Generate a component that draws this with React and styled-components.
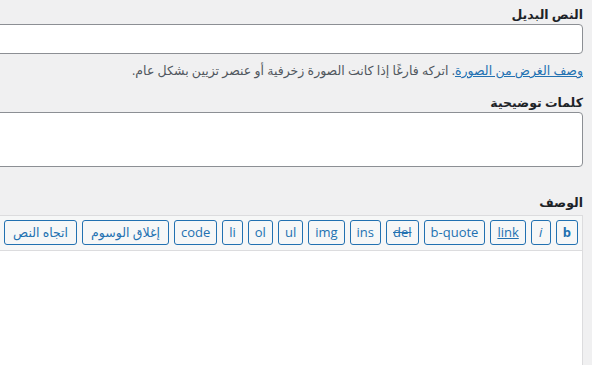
import React from 'react';
import styled, {createGlobalStyle} from 'styled-components';

const GlobalStyle = createGlobalStyle`
  html, body {
    margin: 0;
    padding: 0;
    background: #f0f0f1;
    direction: rtl;
    overflow: hidden;
  }
  body {
    font-family: "Open Sans", "DejaVu Sans", sans-serif;
    color: #1d2327;
  }
`

const Page = styled.div`
  width: 640px;
  margin-right: 9px;
  padding-top: 6px;
  height: 365px;
`

const Field = styled.div`
  margin-bottom: ${props => props.$space || 0}px;
`

const Label = styled.label`
  display: block;
  font-size: 12.5px;
  font-weight: 700;
  line-height: 18px;
  color: #1d2327;
`

const TextInput = styled.input`
  display: block;
  box-sizing: border-box;
  width: 100%;
  height: 30px;
  margin: 0;
  border: 1px solid #8c8f94;
  border-radius: 4px;
  background: #fff;
`

const TextArea = styled.textarea`
  display: block;
  box-sizing: border-box;
  width: 100%;
  height: 55px;
  margin: 0;
  border: 1px solid #8c8f94;
  border-radius: 4px;
  background: #fff;
  resize: none;
`

const Help = styled.p`
  margin: 8px 0 0;
  font-size: 12.5px;
  line-height: 18px;
  color: #50575e;

  a {
    color: #2271b1;
    text-decoration: underline;
  }
`

const Editor = styled.div`
  margin-top: 3px;
  border: 1px solid #dcdcde;
  border-left: 0;
`

const Toolbar = styled.div`
  display: flex;
  gap: 5px;
  padding: 4px 4px 5px;
  background: #f6f7f7;
  border-bottom: 1px solid #dcdcde;
`

const TagButton = styled.button`
  box-sizing: border-box;
  height: 25px;
  min-width: 20px;
  padding: 0 ${props => props.$arabic ? 8 : 6}px;
  margin: 0;
  border: 1px solid #2271b1;
  border-radius: 3px;
  background: #f6f7f7;
  color: #2271b1;
  font-family: "Open Sans", "DejaVu Sans", sans-serif;
  font-size: ${props => props.$arabic ? 12.5 : 13}px;
  line-height: 23px;
  white-space: nowrap;
  font-weight: ${props => props.$bold ? 700 : 400};
  font-style: ${props => props.$italic ? 'italic' : 'normal'};
  text-decoration: ${props => props.$deco || 'none'};
`

const Body = styled.div`
  height: 120px;
  background: #fff;
`

const buttons = [
  {text: 'b', bold: true},
  {text: 'i', italic: true},
  {text: 'link', deco: 'underline'},
  {text: 'b-quote'},
  {text: 'del', deco: 'line-through'},
  {text: 'ins'},
  {text: 'img'},
  {text: 'ul'},
  {text: 'ol'},
  {text: 'li'},
  {text: 'code'},
  {text: 'إغلاق الوسوم', arabic: true},
  {text: 'اتجاه النص', arabic: true},
]

export default function App() {
  return (
    <>
      <GlobalStyle/>
      <Page>
        <Field $space={14}>
          <Label>النص البديل</Label>
          <TextInput type="text"/>
          <Help>
            <a href="#">وصف الغرض من الصورة</a>. اتركه فارغًا إذا كانت الصورة زخرفية أو عنصر تزيين بشكل عام.
          </Help>
        </Field>
        <Field $space={27}>
          <Label>كلمات توضيحية</Label>
          <TextArea/>
        </Field>
        <Field>
          <Label>الوصف</Label>
          <Editor>
            <Toolbar>
              {buttons.map(b => (
                <TagButton key={b.text} $bold={b.bold} $italic={b.italic} $deco={b.deco} $arabic={b.arabic}>
                  {b.text}
                </TagButton>
              ))}
            </Toolbar>
            <Body/>
          </Editor>
        </Field>
      </Page>
    </>
  )
}
